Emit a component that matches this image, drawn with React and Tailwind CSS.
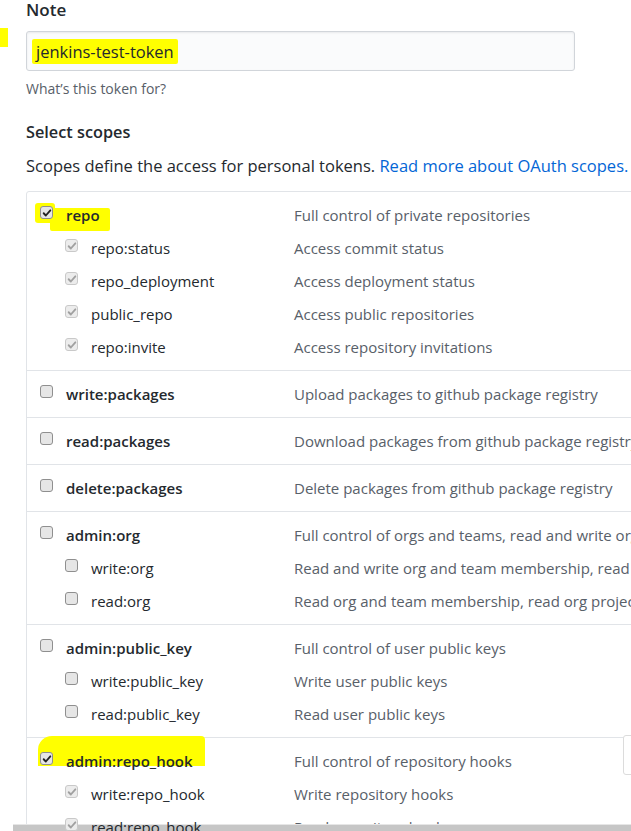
import { Fragment } from 'react'

const GROUPS = [
  {
    name: 'repo',
    desc: 'Full control of private repositories',
    checked: true,
    children: [
      ['repo:status', 'Access commit status'],
      ['repo_deployment', 'Access deployment status'],
      ['public_repo', 'Access public repositories'],
      ['repo:invite', 'Access repository invitations'],
    ],
  },
  { name: 'write:packages', desc: 'Upload packages to github package registry', children: [] },
  { name: 'read:packages', desc: 'Download packages from github package registry', children: [] },
  { name: 'delete:packages', desc: 'Delete packages from github package registry', children: [] },
  {
    name: 'admin:org',
    desc: 'Full control of orgs and teams, read and write org projects',
    children: [
      ['write:org', 'Read and write org and team membership, read and write org projects'],
      ['read:org', 'Read org and team membership, read org projects'],
    ],
  },
  {
    name: 'admin:public_key',
    desc: 'Full control of user public keys',
    children: [
      ['write:public_key', 'Write user public keys'],
      ['read:public_key', 'Read user public keys'],
    ],
  },
  {
    name: 'admin:repo_hook',
    desc: 'Full control of repository hooks',
    checked: true,
    children: [
      ['write:repo_hook', 'Write repository hooks'],
      ['read:repo_hook', 'Read repository hooks'],
    ],
  },
]

function Box({ checked, disabled }) {
  return (
    <span
      className={[
        'relative z-10 inline-flex size-[13px] shrink-0 items-center justify-center rounded-[3px] border',
        disabled ? 'border-[#c9c9c9] bg-[#ececec]' : 'border-[#8f8f8f] bg-[#e6e6e6]',
      ].join(' ')}
    >
      {checked ? (
        <svg viewBox="0 0 12 12" className="size-[10px]" aria-hidden>
          <path
            d="M2 6.3 L4.6 9 L10 2.8"
            fill="none"
            stroke={disabled ? '#a0a0a0' : '#222'}
            strokeWidth="2.2"
            strokeLinecap="round"
            strokeLinejoin="round"
          />
        </svg>
      ) : null}
    </span>
  )
}

function Row({ name, desc, checked, nested, disabled, highlight }) {
  return (
    <div className="relative flex h-[33px] items-center">
      {highlight === 'repo' ? (
        <>
          <span className="absolute left-[-5px] top-[4px] h-[20px] w-[20px] rounded-[3px] bg-[#ffff00]" />
          <span className="absolute left-[10px] top-[9px] h-[23px] w-[60px] rounded-[2px] bg-[#ffff00]" />
        </>
      ) : null}
      {highlight === 'hook' ? (
        <span className="absolute left-[-2px] top-[-9px] h-[30px] w-[167px] rounded-tl-[14px] rounded-tr-[4px] bg-[#ffff00]" />
      ) : null}
      <div className={['flex w-[254px] shrink-0 items-center gap-[13px]', nested ? 'pl-[25px]' : ''].join(' ')}>
        <span className="-mt-[6px] flex">
          <Box checked={checked} disabled={disabled} />
        </span>
        <span
          className={[
            'relative z-10 whitespace-nowrap text-[15px] text-[#24292e]',
            nested ? 'font-normal' : 'font-semibold',
          ].join(' ')}
        >
          {name}
        </span>
      </div>
      <span className="whitespace-nowrap text-[15px] text-[#586069]">{desc}</span>
    </div>
  )
}

export default function App() {
  return (
    <div
      className="relative h-[831px] w-[631px] overflow-hidden bg-white text-[#24292e]"
      style={{ fontFamily: '"Open Sans", "Noto Sans", sans-serif' }}
    >
      <span className="absolute left-0 top-[28px] h-[19px] w-[8px] bg-[#ffff00]" />
      <div className="pl-[26px]">
        <h2 className="text-[17px] font-semibold leading-[20px]">Note</h2>
        <div className="mt-[11px] flex h-[40px] w-[549px] items-center rounded-[3px] border border-[#d1d5da] bg-[#fafbfc] pl-[5px] shadow-[inset_0_1px_2px_rgba(27,31,35,0.075)]">
          <span className="rounded-[2px] bg-[#ffff00] px-[4px] py-[2px] text-[16.5px] leading-[21px] text-[#24292e]">
            jenkins-test-token
          </span>
        </div>
        <p className="mt-[8px] text-[14px] leading-[20px] text-[#586069]">What’s this token for?</p>

        <h3 className="mt-[22px] text-[16.3px] font-semibold leading-[22px]">Select scopes</h3>
        <p className="mt-[12px] whitespace-nowrap text-[16.5px] leading-[22px]">
          Scopes define the access for personal tokens.{' '}
          <span className="text-[#0366d6]">Read more about OAuth scopes.</span>
        </p>

        <div className="mt-[14px] w-[700px] rounded-tl-[3px] border border-[#e1e4e8]">
          {GROUPS.map((g, i) => (
            <Fragment key={g.name}>
              <div className={['pb-[6px] pl-[13px] pt-[7px]', i > 0 ? 'border-t border-[#e1e4e8]' : ''].join(' ')}>
                <Row
                  name={g.name}
                  desc={g.desc}
                  checked={g.checked}
                  highlight={g.name === 'repo' ? 'repo' : g.name === 'admin:repo_hook' ? 'hook' : null}
                />
                {g.children.map(([n, d]) => (
                  <Row key={n} name={n} desc={d} nested checked={g.checked} disabled={g.checked} />
                ))}
              </div>
            </Fragment>
          ))}
        </div>
      </div>

      <div className="absolute right-[-10px] top-[735px] h-[40px] w-[18px] rounded-l-[3px] border border-[#dcdcdc] bg-white" />
      <div className="absolute bottom-0 left-[13px] right-0 h-[7px] border-t border-[#e6e6e6] bg-[#c6c6c6]" />
    </div>
  )
}
